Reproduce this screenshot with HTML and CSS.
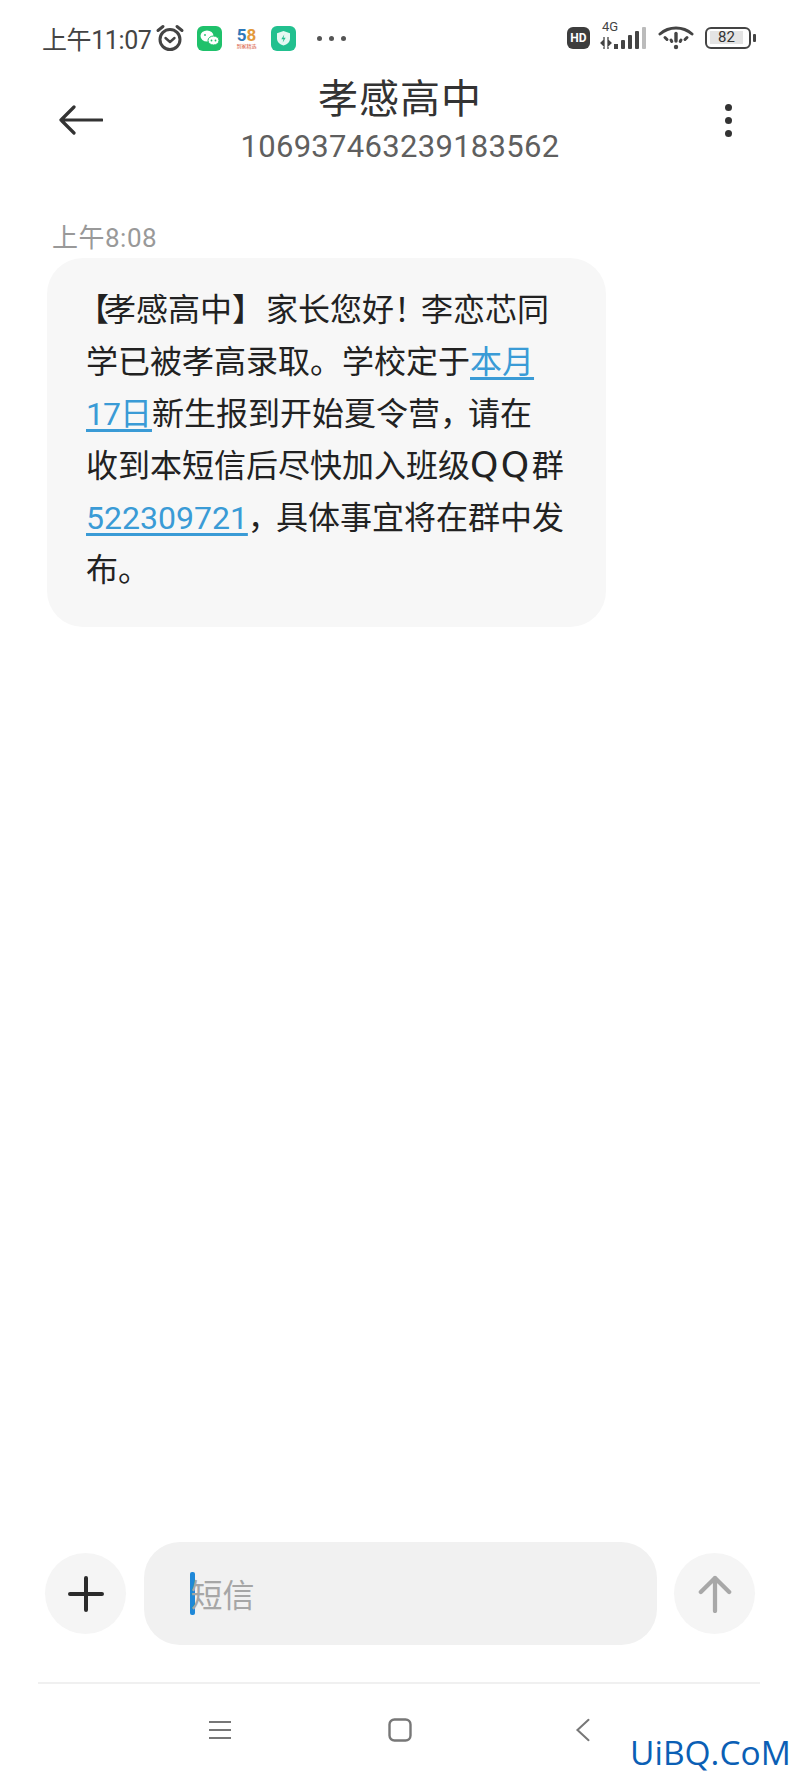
FILE: index.html
```html
<!DOCTYPE html>
<html lang="zh-CN">

<head>
  <meta charset="UTF-8">
  <meta name="viewport" content="width=device-width, initial-scale=1.0">
  <title>短信</title>
  <link rel="stylesheet" href="styles.css">
</head>

<body>
  <div class="phone">
    <!-- status bar -->
    <div class="statusBar">
      <div class="statusLeft">
        <span class="clock">上午11:07</span>
        <svg class="alarmIcon" viewBox="0 0 30 30" fill="none" stroke="#444" stroke-linecap="round">
          <circle cx="15" cy="16.500" r="10" stroke-width="3" />
          <path d="M10.500 15l4.500 4 4.500-4" stroke-width="2.400" stroke-linejoin="round" />
          <path d="M3 7.500L8 3.500M27 7.500L22 3.500" stroke-width="3" />
        </svg>
        <svg class="appIcon" viewBox="0 0 25 25">
          <rect width="25" height="25" rx="6" fill="#1fc16b" />
          <ellipse cx="10" cy="10" rx="6.500" ry="5.500" fill="#fff" />
          <ellipse cx="16.500" cy="14.500" rx="5.500" ry="4.500" fill="#fff" stroke="#1fc16b" />
          <circle cx="14.500" cy="14.500" r="0.900" fill="#1fc16b" />
          <circle cx="18.500" cy="14.500" r="0.900" fill="#1fc16b" />
          <circle cx="8" cy="9" r="0.900" fill="#1fc16b" />
        </svg>
        <span class="logo58">
          <span class="logoNum"><i class="five">5</i><i class="eight">8</i></span>
          <span class="logoSub">到家精选</span>
        </span>
        <svg class="appIcon shieldIcon" viewBox="0 0 25 25">
          <rect width="25" height="25" rx="6" fill="#22c08f" />
          <path d="M12.500 5l6.500 2.200v5.300c0 3.600-2.800 5.900-6.500 7-3.700-1.100-6.500-3.400-6.500-7V7.200z" fill="#e6f8f2" />
          <path d="M13.300 8.500l-3 4.700h2.200l-.8 3.300 3-4.700h-2.200z" fill="#22c08f" />
        </svg>
        <span class="moreDots"><i></i><i></i><i></i></span>
      </div>

      <div class="statusRight">
        <span class="hdBadge">HD</span>
        <span class="signal">
          <span class="netLabel">4G</span>
          <svg class="signalIcon" viewBox="0 0 50 24">
            <path d="M5 10v12M2 16l3-3v6zM9 10v12M12 16l-3-3v6z" fill="#444" stroke="#444" stroke-width="1.300" />
            <rect x="15" y="17" width="4" height="5" fill="#444" />
            <rect x="22" y="13" width="4" height="9" rx="1" fill="#444" />
            <rect x="29" y="8" width="4" height="14" rx="1" fill="#444" />
            <rect x="36" y="4" width="4" height="18" rx="1" fill="#444" />
            <rect x="43" y="0" width="4" height="22" rx="1" fill="#bbb" />
          </svg>
        </span>
        <svg class="wifiIcon" viewBox="0 0 36 26" fill="none" stroke="#444" stroke-linecap="round">
          <path d="M2 9C11 1 25 1 34 9" stroke-width="3" />
          <path d="M7 12.500L9 14.500M13 15L13.800 16.500M29 12.500L27 14.500M23 15L22.200 16.500" stroke-width="3" />
          <path d="M18 8.500v7.500" stroke-width="3.400" />
          <circle cx="18" cy="22" r="2.200" fill="#444" stroke="none" />
        </svg>
        <span class="battery">
          <span class="batteryBody"><span class="batteryText">82</span></span>
          <span class="batteryTip"></span>
        </span>
      </div>
    </div>

    <!-- top bar -->
    <div class="topBar">
      <svg class="backIcon" viewBox="0 0 44 30" fill="none" stroke="#333" stroke-width="3.200" stroke-linecap="round" stroke-linejoin="round">
        <path d="M43 15H2M15 2L2 15l13 13" />
      </svg>
      <div class="contact">
        <div class="contactName">孝感高中</div>
        <div class="contactNumber">106937463239183562</div>
      </div>
      <div class="menuDots"><i></i><i></i><i></i></div>
    </div>

    <!-- messages -->
    <div class="messages">
      <div class="msgTime">上午8:08</div>
      <div class="bubble"><span class="bracketOpen">【</span>孝感高中<span class="bracketClose">】</span>家长您好<span class="bang">！</span>李恋芯同<br>学已被孝高录取。学校定于<a class="msgLink">本月<br><span class="shortNum">17</span>日</a>新生报到开始夏令营<span class="comma">，</span>请在<br>收到本短信后尽快加入班级<span class="qq">QQ</span>群<br><a class="msgLink">522309721</a><span class="comma">，</span>具体事宜将在群中发<br>布。</div>
    </div>

    <!-- input row -->
    <div class="inputRow">
      <div class="roundBtn">
        <svg class="plusIcon" viewBox="0 0 36 36" stroke="#2b2b2b" stroke-width="4" stroke-linecap="round">
          <path d="M18 2v32M2 18h32" />
        </svg>
      </div>
      <div class="msgInput">
        <span class="caret"></span>
        <span class="placeholder">短信</span>
      </div>
      <div class="roundBtn">
        <svg class="sendIcon" viewBox="0 0 36 40" fill="none" stroke="#a8a8a8" stroke-width="4.500" stroke-linecap="round" stroke-linejoin="round">
          <path d="M18 38V3M3 18L18 3l15 15" />
        </svg>
      </div>
    </div>

    <!-- nav bar -->
    <div class="navBar">
      <svg class="navIcon" viewBox="0 0 24 20" stroke="#777" stroke-width="2">
        <path d="M1 2h22M1 10h22M1 18h22" />
      </svg>
      <svg class="navIcon navHome" viewBox="0 0 24 24" fill="none" stroke="#777" stroke-width="2.400">
        <rect x="1.500" y="1.500" width="21" height="21" rx="5" />
      </svg>
      <svg class="navIcon" viewBox="0 0 16 26" fill="none" stroke="#777" stroke-width="2.200" stroke-linecap="round">
        <path d="M14 2L2 13l12 11" />
      </svg>
    </div>

    <div class="watermark">UiBQ.CoM</div>
  </div>
</body>

</html>
```

FILE: styles.css
```css
* {
  box-sizing: border-box;
}

body {
  margin: 0;
  background-color: #fff;
  font-family: "Roboto", "Noto Sans CJK SC", sans-serif;
}

i {
  font-style: normal;
}

.phone {
  position: relative;
  display: flex;
  flex-direction: column;
  width: 800px;
  height: 1778px;
  overflow: hidden;
}

/* status bar */
.statusBar {
  display: flex;
  justify-content: space-between;
  align-items: center;
  height: 38px;
  margin-top: 19px;
  padding: 0 44px 0 42px;
}

.statusLeft,
.statusRight {
  display: flex;
  align-items: center;
}

.clock {
  color: #444;
  font-size: 25px;
  letter-spacing: -0.4px;
}

.alarmIcon {
  width: 30px;
  height: 30px;
  margin-left: 4px;
}

.appIcon {
  width: 25px;
  height: 25px;
  margin-left: 12px;
}

.logo58 {
  display: flex;
  flex-direction: column;
  align-items: center;
  width: 24px;
  margin-left: 12px;
}

.logoNum {
  display: flex;
  font-size: 17px;
  line-height: 16px;
  font-weight: 700;
}

.five {
  color: #2f78b8;
}

.eight {
  color: #e39a3c;
}

.logoSub {
  color: #d9583c;
  font-size: 5px;
  line-height: 7px;
  white-space: nowrap;
}

.shieldIcon {
  margin-left: 13px;
}

.moreDots {
  display: flex;
  gap: 7px;
  margin-left: 21px;
}

.moreDots i {
  width: 5px;
  height: 5px;
  border-radius: 50%;
  background-color: #555;
}

.hdBadge {
  width: 23px;
  height: 22px;
  border-radius: 6px;
  background-color: #3d3d3d;
  color: #fff;
  font-size: 12px;
  font-weight: 700;
  line-height: 22px;
  text-align: center;
}

.signal {
  position: relative;
  width: 50px;
  height: 26px;
  margin-left: 9px;
}

.netLabel {
  position: absolute;
  left: 3px;
  top: -5px;
  color: #444;
  font-size: 13px;
  line-height: 14px;
}

.signalIcon {
  display: block;
  width: 50px;
  height: 24px;
  margin-top: 2px;
}

.wifiIcon {
  width: 36px;
  height: 26px;
  margin-left: 9px;
}

.battery {
  display: flex;
  align-items: center;
  margin-left: 11px;
}

.batteryBody {
  width: 46px;
  height: 22px;
  padding: 2px 3px;
  border: 2.500px solid #444;
  border-radius: 6px;
}

.batteryText {
  display: block;
  width: 33px;
  height: 13px;
  background-color: #e4e4e4;
  color: #333;
  font-size: 15px;
  line-height: 13px;
  text-align: center;
}

.batteryTip {
  width: 3px;
  height: 8px;
  margin-left: 2px;
  border-radius: 1px;
  background-color: #444;
}

/* top bar */
.topBar {
  display: grid;
  grid-template-columns: 1fr auto 1fr;
  align-items: center;
  height: 108px;
  margin-top: 9px;
  padding: 0 59px;
}

.backIcon {
  width: 44px;
  height: 30px;
}

.contact {
  text-align: center;
}

.contactName {
  color: #333;
  font-size: 40px;
  line-height: 52px;
  letter-spacing: 1px;
}

.contactNumber {
  margin-top: 1px;
  color: #5f5f5f;
  font-size: 31px;
  line-height: 40px;
  letter-spacing: 0.3px;
}

.menuDots {
  display: flex;
  flex-direction: column;
  justify-self: end;
  gap: 6px;
  margin-right: 9px;
}

.menuDots i {
  width: 7px;
  height: 7px;
  border-radius: 50%;
  background-color: #333;
}

/* messages */
.messages {
  flex: 1;
  padding: 49px 0 0 47px;
}

.msgTime {
  margin: 0 0 5px 5px;
  color: #999;
  font-size: 26px;
  line-height: 30px;
  letter-spacing: 0.5px;
}

.bubble {
  width: 559px;
  height: 369px;
  padding: 26px 0 0 39px;
  border-radius: 36px;
  background-color: #f7f7f7;
  color: #222;
  font-size: 32px;
  line-height: 52px;
  white-space: nowrap;
}

.bracketOpen {
  margin-left: -9px;
  letter-spacing: -5px;
}

.bracketClose {
  letter-spacing: 2px;
}

.bang {
  letter-spacing: -5px;
}

.comma {
  letter-spacing: -4px;
}

.shortNum {
  letter-spacing: -1px;
}

.qq {
  font-family: "DejaVu Sans", sans-serif;
  font-size: 36px;
  line-height: 1;
  letter-spacing: 2.500px;
}

.msgLink {
  color: #3a9bd6;
  text-decoration: underline;
  text-underline-offset: 4px;
}

/* input row */
.inputRow {
  display: flex;
  align-items: center;
  justify-content: space-between;
  padding: 0 45px;
}

.roundBtn {
  display: flex;
  align-items: center;
  justify-content: center;
  width: 81px;
  height: 81px;
  border-radius: 50%;
  background-color: #f5f5f5;
}

.plusIcon {
  width: 36px;
  height: 36px;
}

.sendIcon {
  width: 34px;
  height: 38px;
}

.msgInput {
  display: flex;
  align-items: center;
  width: 513px;
  height: 103px;
  padding-left: 46px;
  border-radius: 36px;
  background-color: #f1f1f1;
}

.caret {
  width: 5px;
  height: 43px;
  border-radius: 2px;
  background-color: #1f88d8;
}

.placeholder {
  margin-left: -4px;
  margin-top: -2px;
  color: #a6a6a6;
  font-size: 32px;
}

/* nav bar */
.navBar {
  display: flex;
  justify-content: space-between;
  align-items: center;
  height: 96px;
  margin: 37px 40px 0 38px;
  padding: 0 165px 2px 170px;
  border-top: 2px solid #f0f0f0;
}

.navIcon {
  width: 24px;
  height: 24px;
}

.navHome {
  margin-right: 4px;
}

.watermark {
  position: absolute;
  left: 630px;
  bottom: 6px;
  color: #0b5fb5;
  font-family: "Open Sans", sans-serif;
  font-size: 33.500px;
  line-height: 40px;
  white-space: nowrap;
}
```
